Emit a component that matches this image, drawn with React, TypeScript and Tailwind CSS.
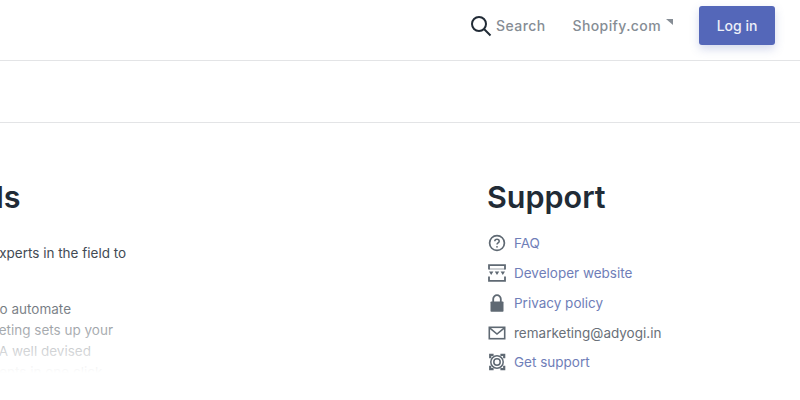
import React from 'react';

const font = { fontFamily: 'Inter, "Liberation Sans", sans-serif' };

const links = [
  { label: 'FAQ', icon: 'faq', link: true },
  { label: 'Developer website', icon: 'dev', link: true },
  { label: 'Privacy policy', icon: 'lock', link: true },
  { label: 'remarketing@adyogi.in', icon: 'mail', link: false },
  { label: 'Get support', icon: 'support', link: true },
];

const Icon = ({ name }: { name: string }) => {
  if (name === 'faq') {
    return (
      <svg width="18" height="18" viewBox="0 0 18 18" fill="none" stroke="#5f6973" strokeWidth="1.7">
        <circle cx="9" cy="9" r="7.4" />
        <path d="M6.8 7.3c0-1.3 1-2.1 2.2-2.1s2.2.8 2.2 2c0 1.7-2.2 1.7-2.2 3.3" strokeWidth="1.5" />
        <circle cx="9" cy="12.8" r="0.9" fill="#5f6973" stroke="none" />
      </svg>
    );
  }
  if (name === 'dev') {
    return (
      <svg width="18" height="18" viewBox="0 0 18 18" fill="none" stroke="#5f6973" strokeWidth="1.8">
        <path d="M1 5.5V1.2h16v4.3M1 12.5v4.3h16v-4.3" />
        <path d="M1 5h16" strokeWidth="1" opacity="0.6" />
        <path d="M1 7.5h4.4L3.2 11zM6.8 7.5h4.4L9 11zM12.6 7.5H17L14.8 11z" fill="#5f6973" stroke="none" />
      </svg>
    );
  }
  if (name === 'lock') {
    return (
      <svg width="18" height="18" viewBox="0 0 18 18" fill="none">
        <path d="M5.2 8V5a3.8 3.8 0 0 1 7.6 0V8" stroke="#5f6973" strokeWidth="1.8" />
        <rect x="2.5" y="7.4" width="13" height="10.4" rx="0.8" fill="#5f6973" />
      </svg>
    );
  }
  if (name === 'mail') {
    return (
      <svg width="18" height="18" viewBox="0 0 18 18" fill="none" stroke="#5f6973" strokeWidth="1.6">
        <rect x="1.3" y="3.3" width="15.4" height="11.4" />
        <path d="M1.6 3.8 9 10l7.4-6.2" />
      </svg>
    );
  }
  return (
    <svg width="18" height="18" viewBox="0 0 18 18" fill="none" stroke="#5f6973" strokeWidth="1.5">
      <circle cx="9" cy="9" r="6.2" />
      <circle cx="9" cy="9" r="3.2" />
      <path d="M2.2 5.2V1.8h3.4M12.4 1.8h3.8v3.4M16.2 12.8v3.4h-3.8M5.6 16.2H2.2v-3.4" strokeWidth="2.2" />
    </svg>
  );
};

export default function App() {
  return (
    <div className="w-[800px] h-[400px] overflow-hidden bg-white" style={font}>
      {/* Top bar */}
      <header className="h-[61px] border-b border-[#e3e4e6] flex items-center justify-end pr-[25px] pb-[9px]">
        <svg width="22" height="22" viewBox="0 0 22 22" fill="none" stroke="#212b36" strokeWidth="2" className="mr-[4px]">
          <circle cx="9" cy="9" r="7" />
          <path d="m14 14 6.5 6.5" />
        </svg>
        <span className="text-[14px] font-medium tracking-[0.4px] text-[#868d95]">Search</span>
        <span className="ml-[27px] text-[14px] font-medium tracking-[0.4px] text-[#868d95]">Shopify.com</span>
        <svg width="8" height="8" viewBox="0 0 8 8" className="ml-[5px] mb-[6px]">
          <path d="M0 0h7v6z" fill="#868d95" />
        </svg>
        <button className="ml-[25px] w-[76px] h-[39px] rounded-[3px] bg-[#5467b9] text-white/90 text-[14px] font-medium shadow-[0_4px_10px_rgba(84,103,185,0.25)]">
          Log in
        </button>
      </header>

      {/* Empty strip */}
      <div className="h-[62px] border-b border-[#e3e4e6]" />

      <main className="flex pt-[56px]">
        {/* Left column, cut by the window edge */}
        <section className="relative w-[487px] h-[194px] overflow-hidden">
          <div className="-ml-[88px] text-[13.5px] leading-[21px] text-[#434b54] whitespace-nowrap">
            <h2 className="-ml-[143px] text-[30.5px] leading-[36px] font-semibold text-[#212b36]">Remarketing Ads</h2>
            <p className="mt-[28px]">Our team of experts in the field to</p>
            <p className="mt-[35px] ml-[2px]">Use our tool to automate</p>
            <p className="ml-[1px]">Next, Remarketing sets up your</p>
            <p className="ml-[7px]">of your ads. A well devised</p>
            <p>strategy of clients in one click</p>
          </div>
          <div className="absolute left-0 right-0 bottom-0 h-[90px] bg-gradient-to-b from-white/0 to-white" />
        </section>

        {/* Support */}
        <section className="flex-1">
          <h2 className="text-[30.5px] leading-[36px] font-semibold text-[#212b36]">Support</h2>
          <ul className="mt-[13px] flex flex-col">
            {links.map((l) => (
              <li key={l.label} className="h-[30px] last:-mt-[1px] ml-[1px] flex items-center gap-[8px] text-[13.5px]">
                <Icon name={l.icon} />
                <span className={l.link ? 'text-[#6f7eb8]' : 'text-[#697079]'}>{l.label}</span>
              </li>
            ))}
          </ul>
        </section>
      </main>
    </div>
  );
}
